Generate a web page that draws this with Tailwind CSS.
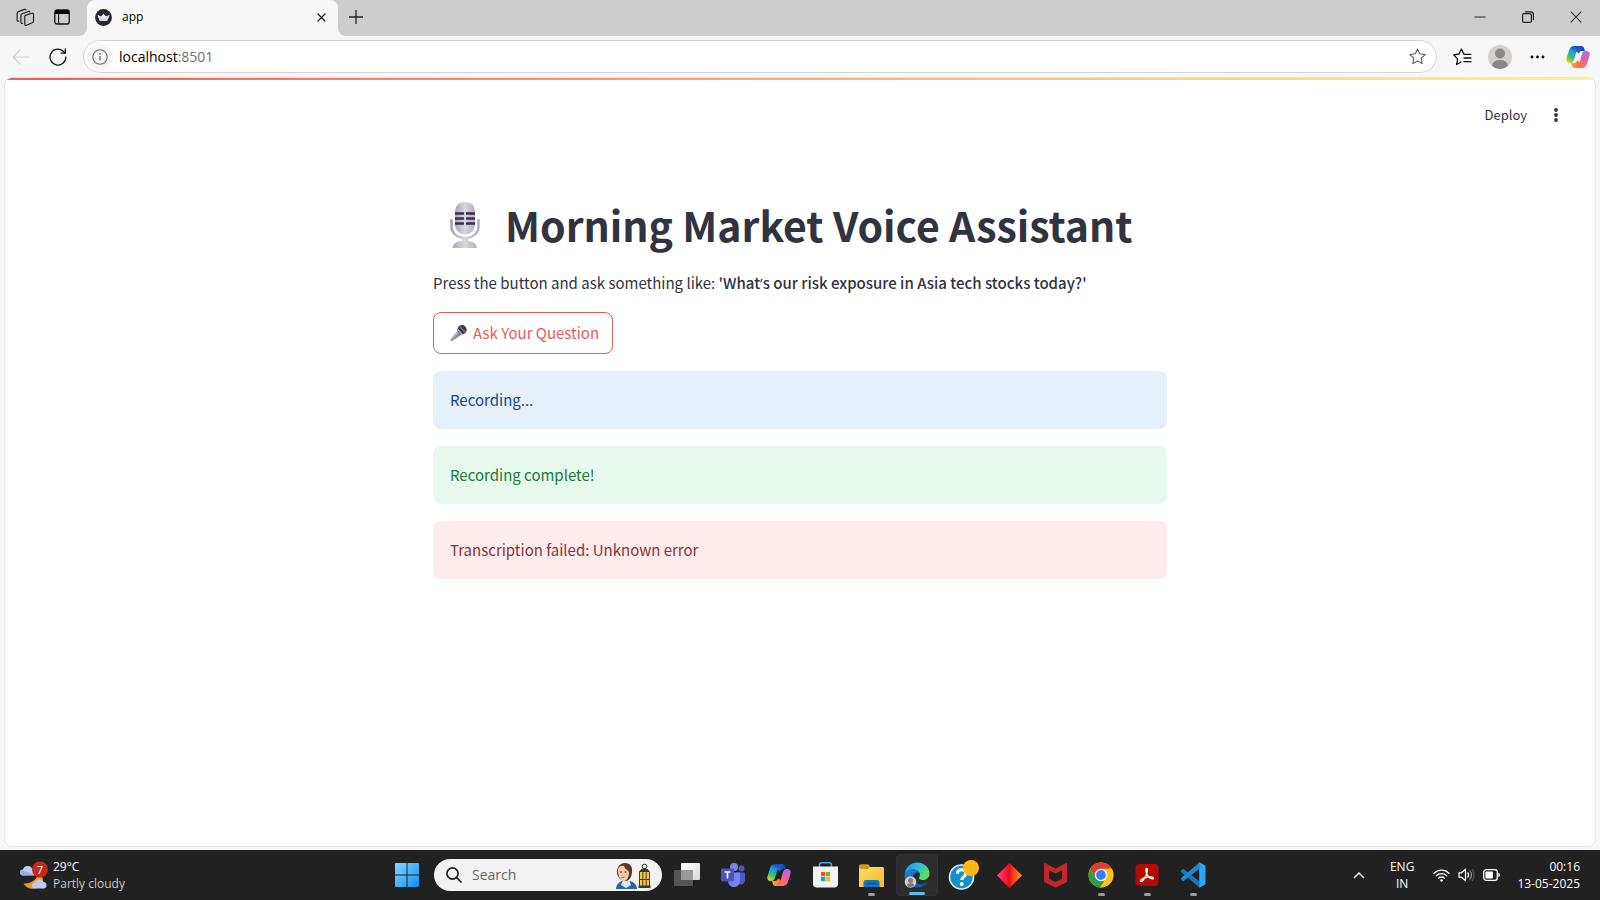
<!DOCTYPE html>
<html lang="en">
<head>
<meta charset="utf-8">
<meta name="viewport" content="width=device-width, initial-scale=1">
<title>app</title>
<script src="https://cdn.jsdelivr.net/npm/@tailwindcss/browser@4"></script>
</head>
<body class="flex h-screen flex-col overflow-hidden bg-[#f7f7f7] font-['Open_Sans','Noto_Sans',sans-serif] text-black">

<svg class="absolute h-0 w-0" aria-hidden="true">
  <defs>
    <linearGradient id="cpA" x1="0.6" y1="0" x2="0.2" y2="1"><stop offset="0" stop-color="#1b44c8"/><stop offset=".35" stop-color="#1fa3e6"/><stop offset=".65" stop-color="#3fbf6a"/><stop offset="1" stop-color="#f3d21c"/></linearGradient>
    <linearGradient id="cpB" x1="0.8" y1="0" x2="0.3" y2="1"><stop offset="0" stop-color="#a56bf0"/><stop offset=".5" stop-color="#ee5fa0"/><stop offset="1" stop-color="#ff7a3c"/></linearGradient>
    <linearGradient id="cpC" x1="0" y1="0" x2="1" y2="0"><stop offset="0" stop-color="#1f7be0"/><stop offset="1" stop-color="#1739a8"/></linearGradient>
    <linearGradient id="cpD" x1="0" y1="0" x2="1" y2="0"><stop offset="0" stop-color="#ffb03a"/><stop offset="1" stop-color="#f4503c"/></linearGradient>
    <symbol id="copilot" viewBox="0 0 24 24">
      <path fill="url(#cpC)" d="M8 1h7.500c1.600 0 2.200 1 2.600 2.300L19 6h-3c-1.500 0-2.500.8-3 2.400L9 6z"/>
      <path fill="url(#cpD)" d="M16 23H8.500c-1.600 0-2.200-1-2.600-2.300L5 18h3c1.500 0 2.500-.8 3-2.400l4 2.400z"/>
      <path fill="url(#cpA)" d="M8.500 1h5c-1.400.4-2 1.700-2.500 3.300L8.300 14c-.6 2.300-1.500 4-3.800 4H3.500C1 18-.2 15.800.5 13.200L3.300 4.500C4 2.200 5.700 1 8.500 1z"/>
      <path fill="url(#cpB)" d="M15.500 23h-5c1.400-.4 2-1.700 2.500-3.300l2.700-9.700c.6-2.300 1.500-4 3.800-4h1c2.500 0 3.700 2.200 3 4.800l-2.800 8.700c-.7 2.300-2.400 3.500-5.200 3.500z"/>
    </symbol>
  </defs>
</svg>

<!-- Tab strip -->
<header class="flex h-[36px] shrink-0">
  <div class="flex w-[87px] items-center gap-[19px] rounded-br-lg bg-[#cdcdcd] pb-0.5 pl-4">
    <button aria-label="Workspaces"><svg class="size-[19px]" viewBox="0 0 19 19" fill="none" stroke="#222" stroke-width="1.200" stroke-linejoin="round" stroke-linecap="round"><path d="M9.300 7.400 15.800 5.300c1-.3 1.700.2 1.700 1.100v6.500c0 .8-.4 1.500-1.200 1.800l-5.800 2.500c-.9.400-1.700 0-1.700-1V9.100c0-.9-.3-1.400.5-1.700z"/><path d="M6.500 15.300c-1 .3-1.600-.2-1.600-1.100V7.500c0-.8.400-1.500 1.200-1.800l6.200-2.200c.7-.2 1.300 0 1.500.5"/><path d="M2.700 13.200c-1 .2-1.600-.3-1.600-1.200V5.400c0-.8.400-1.500 1.200-1.800l6.200-2.200c.7-.2 1.300 0 1.500.5"/></svg></button>
    <button aria-label="Tab actions"><svg class="size-4" viewBox="0 0 16 16"><rect x=".8" y="1" width="14.400" height="14" rx="2.200" fill="none" stroke="#111" stroke-width="1.300"/><path d="M.8 5V3A2.200 2.200 0 0 1 3 1h10a2.200 2.200 0 0 1 2.200 2v2z" fill="#000"/><path d="M4.600 5v10" stroke="#111" stroke-width="1.100"/></svg></button>
  </div>
  <div class="w-[251px] bg-[linear-gradient(#cdcdcd_50%,#f7f7f7_50%)]">
    <div class="flex h-full items-center rounded-t-lg bg-[#f7f7f7] pr-2 pb-0.5 pl-2">
      <svg class="size-[17px]" viewBox="0 0 17 17"><circle cx="8.500" cy="8.500" r="8.400" fill="#262730"/><path d="m2.600 6 3.600 1.400 2.300-2.800 2.300 2.800L14.400 6l-1.900 5.200c-.1.300-.4.500-.7.500H5.200c-.3 0-.6-.2-.7-.5z" fill="#fff"/><path d="m2.600 6 5.900 3.600L14.400 6l-1.900 5.200c-.1.300-.4.500-.7.500H5.200c-.3 0-.6-.2-.7-.5z" fill="#dcdce0"/></svg>
      <span class="flex-1 pl-2.5 text-xs">app</span>
      <button aria-label="Close tab" class="p-1"><svg class="size-[9px]" viewBox="0 0 9 9"><path d="m.6.6 7.800 7.800M8.400.6.6 8.400" stroke="#111" stroke-width="1.300" fill="none"/></svg></button>
    </div>
  </div>
  <div class="flex flex-1 items-center justify-between rounded-bl-lg bg-[#cdcdcd] pb-0.5 pl-[11px]">
    <button aria-label="New tab"><svg class="size-[14px]" viewBox="0 0 14 14"><path d="M7 0v14M0 7h14" stroke="#222" stroke-width="1.300"/></svg></button>
    <div class="flex items-center gap-9 pr-[18px]">
      <button aria-label="Minimize"><svg class="size-3" viewBox="0 0 12 12"><path d="M.5 6h11" stroke="#333" stroke-width="1.100"/></svg></button>
      <button aria-label="Restore"><svg class="size-3" viewBox="0 0 12 12" fill="none" stroke="#222" stroke-width="1.200"><rect x=".6" y="2.600" width="8.800" height="8.800" rx="1.500"/><path d="M3 .8h6c1.300 0 2.400 1 2.400 2.400v6"/></svg></button>
      <button aria-label="Close"><svg class="size-3" viewBox="0 0 12 12"><path d="m.7.700 10.600 10.600M11.300.7.700 11.300" stroke="#333" stroke-width="1.100"/></svg></button>
    </div>
  </div>
</header>

<!-- Toolbar -->
<nav class="flex h-[41px] shrink-0 items-center pr-[10px] pl-3">
  <button aria-label="Back" class="mr-[19px]" disabled><svg class="h-4 w-[18px]" viewBox="0 0 18 16" fill="none" stroke="#cfcfcf" stroke-width="1.200" stroke-linecap="round"><path d="M17 8H1M8 1 1 8l7 7"/></svg></button>
  <button aria-label="Refresh" class="mr-4"><svg class="size-[18px]" viewBox="0 0 18 18" fill="none" stroke="#111" stroke-width="1.300" stroke-linecap="round"><path d="M16.800 9A7.900 7.900 0 1 1 13.900 3l2.100 1.900"/><path d="M16.300 1v4.200h-4.200"/></svg></button>
  <div class="flex h-[33px] flex-1 items-center rounded-full border border-[#d4d4d4] bg-white pr-2.5 pl-[3px]">
    <button aria-label="Site information" class="flex size-[26px] items-center justify-center rounded-full bg-[#f5f5f5]"><svg class="size-4" viewBox="0 0 16 16" fill="none" stroke="#666"><circle cx="8" cy="8" r="7.200" stroke-width="1.100"/><path d="M8 7v4.500" stroke-width="1.300"/><circle cx="8" cy="4.900" r=".5" fill="#666" stroke-width=".7"/></svg></button>
    <a href="http://localhost:8501" class="flex-1 pl-[6px] text-sm">localhost<span class="text-[#707070]">:8501</span></a>
    <button aria-label="Add to favorites"><svg class="size-[17px]" viewBox="0 0 18 18" fill="none" stroke="#555" stroke-width="1.100" stroke-linejoin="round"><path d="m9 1 2.400 5.200 5.700.7-4.200 3.900 1.100 5.700L9 13.700l-5 2.800 1.100-5.700L.9 6.900l5.700-.7z"/></svg></button>
  </div>
  <button aria-label="Favorites" class="ml-4 mr-4"><svg class="h-[18px] w-[19px]" viewBox="0 0 19 18" fill="none" stroke="#111" stroke-width="1.300" stroke-linejoin="round" stroke-linecap="round"><path d="M12.500 6.300 10.700 6 8.400 1 6 6l-5.300.8L4.600 11l-1 5.500L8 14"/><path d="M13 6.300h5M11 10h7M11 13.700h7"/></svg></button>
  <button aria-label="Profile" class="mr-[18px]"><svg class="size-6" viewBox="0 0 24 24"><circle cx="12" cy="12" r="12" fill="#d3d0ce"/><circle cx="12" cy="8.500" r="5" fill="#8b8785"/><path d="M4 20.800C4.500 17 7.500 15 12 15s7.500 2 8 5.800A12 12 0 0 1 12 24a12 12 0 0 1-8-3.200z" fill="#8b8785"/></svg></button>
  <button aria-label="Settings and more" class="mr-[21px]"><svg class="h-1 w-[15px]" viewBox="0 0 15 4"><circle cx="2" cy="2" r="1.400"/><circle cx="7.500" cy="2" r="1.400"/><circle cx="13" cy="2" r="1.400"/></svg></button>
  <button aria-label="Copilot"><svg class="size-6"><use href="#copilot"/></svg></button>
</nav>

<!-- Page -->
<main class="mx-1 mb-[3px] flex min-h-0 flex-1 flex-col overflow-hidden rounded-lg border border-[#e4e4e4] bg-white font-['Noto_Sans_CJK_SC',sans-serif] text-[#31333f]">
  <div class="h-0.5 shrink-0 bg-linear-to-r from-[#ee5a5a] to-[#fdf58a]"></div>
  <div class="flex h-[70px] items-center justify-end gap-[27px] pr-[37px]">
    <button class="text-[13px] leading-5">Deploy</button>
    <button aria-label="Main menu"><svg class="h-[14px] w-1" viewBox="0 0 4 14" fill="#31333f"><circle cx="2" cy="2" r="1.900"/><circle cx="2" cy="7" r="1.900"/><circle cx="2" cy="12" r="1.900"/></svg></button>
  </div>
  <div class="mx-auto flex w-full max-w-[734px] flex-col pt-[42px]">
    <h1 class="flex items-center text-[41px] leading-[64px] font-bold">
      <svg class="mr-[25px] ml-[17px] h-[47px] w-[30px]" viewBox="0 0 30 47" role="img" aria-label="Studio microphone"><defs><linearGradient id="mg" x1="0" x2="1"><stop offset="0" stop-color="#aaa5b3"/><stop offset=".5" stop-color="#d9d6de"/><stop offset="1" stop-color="#b4afc0"/></linearGradient></defs><path d="M1.500 19v6C1.500 32 7 37 15 37s13.500-5 13.500-12v-6" fill="none" stroke="url(#mg)" stroke-width="2.600" stroke-linecap="round"/><path d="M12 36h6v4c5 .5 8 2 9 7H2.500c1-5 4-6.500 9.500-7z" fill="url(#mg)"/><path d="M5 11C5 4.500 9 1 15 1s10 3.500 10 10v12c0 6-4 10.500-10 10.500S5 29 5 23z" fill="url(#mg)"/><path d="M5 12.500h9M16 12.500h9M5 17.500h9M16 17.500h9M5 22.500h9M16 22.500h9" stroke="#3b2c4d" stroke-width="2.400"/></svg>
      <span class="whitespace-nowrap">Morning Market Voice Assistant</span>
    </h1>
    <p class="mt-[14px] text-[15px] leading-[26px]">Press the button and ask something like: <strong class="font-medium">'What<span class="font-['Open_Sans']">’</span>s our risk exposure in Asia tech stocks today?'</strong></p>
    <button class="mt-4 flex h-[42px] items-center self-start rounded-lg border border-[#e85b5b] pr-[13px] pl-4 text-[15px] leading-[26px] text-[#e85b5b]">
      <svg class="mr-[6px] h-4 w-[17px]" viewBox="0 0 17 16" aria-hidden="true"><path d="m8 5.500 4 4L2 16c-.8.300-1.900-.8-1.500-1.600z" fill="#8f8a9a"/><path d="m8 5.500 1.500 1.500L1 15.500.5 14.400z" fill="#b5b1bd"/><circle cx="12" cy="4.700" r="4.600" fill="#3f3350"/><path d="m7.500 4.300 4.700 5.300" stroke="#a9a3b4" stroke-width="1.600"/><path d="m10 1.800 5 5.400" stroke="#8d859d" stroke-width="1.200"/></svg>
      Ask Your Question
    </button>
    <div class="mt-[17px] flex flex-col gap-[17px] text-[15px] leading-[26px]">
      <div role="status" class="rounded-lg bg-[#e6f0fb] px-[17px] py-4 text-[#13478a]">Recording...</div>
      <div role="status" class="rounded-lg bg-[#e7f8ed] px-[17px] py-4 text-[#207a3a]">Recording complete!</div>
      <div role="alert" class="rounded-lg bg-[#feebeb] px-[17px] py-4 text-[#80363f]">Transcription failed: Unknown error</div>
    </div>
  </div>
</main>

<!-- Taskbar -->
<footer class="grid h-[50px] shrink-0 grid-cols-[1fr_auto_1fr] items-center bg-[#212121] text-xs leading-4 text-white">
  <button class="flex items-center justify-self-start pl-5 text-left">
    <svg class="mr-[5px] h-7 w-[28px]" viewBox="0 0 28 28" aria-hidden="true"><path d="M3 14.500a3 3 0 0 1 0-6 5 5 0 0 1 9.500 0 3 3 0 0 1 1 6z" fill="#b9cdf5"/><path d="M3 14.500a3 3 0 0 1-1.500-5.500L14 13.500z" fill="#8fb0ea"/><path d="M19 12c6 4 5 12-2 15-5 2-11 0-13.500-4.500 6 .5 13-3 15.500-10.500z" fill="#f2932b"/><path d="M15 27.500a3 3 0 0 1 0-6 4.500 4.500 0 0 1 8.500-.5 3.300 3.300 0 0 1 .5 6.500z" fill="#b9cdf5"/><circle cx="20" cy="8.500" r="8" fill="#c42b1c"/><text x="20" y="12.500" font-size="11" fill="#fff" text-anchor="middle">7</text></svg>
    <span class="flex flex-col leading-[17px]"><span>29°C</span><span class="text-[#c8c8c8]">Partly cloudy</span></span>
  </button>

  <div class="flex items-center gap-1">
    <button aria-label="Start" class="flex h-[42px] w-[42px] items-center justify-center"><svg class="size-6" viewBox="0 0 24 24"><defs><linearGradient id="win" x1="0" y1="0" x2="1" y2="1"><stop offset="0" stop-color="#7fdcff"/><stop offset="1" stop-color="#0f8cf0"/></linearGradient></defs><path fill="url(#win)" d="M1 0h10.500v11.500H0V1a1 1 0 0 1 1-1zm11.500 0H23a1 1 0 0 1 1 1v10.500H12.500zM0 12.500h11.500V24H1a1 1 0 0 1-1-1zm12.500 0H24V23a1 1 0 0 1-1 1H12.500z"/></svg></button>
    <label class="ml-0.5 flex h-8 w-[228px] items-center rounded-full bg-[#f2f2f2] pr-[11px] pl-3">
      <svg class="size-4" viewBox="0 0 16 16" fill="none" stroke="#222" stroke-width="1.700" stroke-linecap="round"><circle cx="6.500" cy="6.500" r="5.600"/><path d="m10.700 10.700 4.300 4.300"/></svg>
      <input type="text" aria-label="Search" placeholder="Search" class="min-w-0 flex-1 bg-transparent pl-[10px] text-sm text-black outline-none placeholder:text-[#666]">
      <svg class="h-[27px] w-[36px]" viewBox="0 0 36 27" aria-hidden="true"><path d="M1 27c0-4 3-7 6-8h8c4 1 7 4 7 8z" fill="#2c62a8"/><path d="M8 18h6l2 5-5 3-5-3z" fill="#dce9f7"/><path d="M2 10C2 4 6 1 10 1s8 3 7 9c-.5 6-3 9-7 9S2 15 2 10z" fill="#5b3327"/><path d="M3 8c0-3 3-5 6-4 1 3 4 4 5 6 0 5-2 9-5 9-4 0-6-5-6-11z" fill="#f3c9ab"/><path d="M5 10h2M9.500 10h2" stroke="#4a2a20" stroke-width="1"/><path d="m6.500 15.500 3-.3" stroke="#c4534a"/><circle cx="29.500" cy="4.500" r="2.300" fill="none" stroke="#333" stroke-width="1"/><path d="M24 10c1-2.500 3-3.500 5.500-3.500S34 7.500 35 10z" fill="#3a352f"/><path d="M24.500 10h10v14h-10z" fill="#f6c744"/><path d="M24.500 10v14m3.300-14v14m3.400-14v14m3.300-14v14M24 17.500h11" stroke="#4a3a20" stroke-width="1"/><path d="M23.500 23.500h12V26h-12z" fill="#3a352f"/></svg>
    </label>
    <button aria-label="Task view" class="flex h-[42px] w-[42px] items-center justify-center"><svg class="size-[26px]" viewBox="0 0 26 26"><defs><linearGradient id="tv" x1="0" y1="0" x2="1" y2="1"><stop offset="0" stop-color="#fff"/><stop offset="1" stop-color="#d8d8d8"/></linearGradient></defs><rect x="7" y="1" width="19" height="17" rx="1" fill="url(#tv)"/><rect x="0" y="8" width="19" height="16" rx="1" fill="#555"/><path d="M7 8h12v10H7z" fill="#999"/></svg></button>
    <button aria-label="Teams" class="flex h-[42px] w-[42px] items-center justify-center"><svg class="size-[26px]" viewBox="0 0 26 26"><circle cx="21.500" cy="6.500" r="3" fill="#5059c9"/><path d="M16 10.500h9v7c0 3-2 5-4.500 5S16 21 16 18z" fill="#5059c9"/><circle cx="14" cy="5" r="4" fill="#7b83eb"/><path d="M8 10.500h12v8c0 4-2.500 6.500-6 6.500s-6-2.500-6-6.500z" fill="#7b83eb"/><rect x="1" y="6.500" width="13" height="13" rx="1.200" fill="#4b53bc"/><path d="M4.500 10h6M7.500 10v6.500" stroke="#fff" stroke-width="1.600"/></svg></button>
    <button aria-label="Copilot app" class="flex h-[42px] w-[42px] items-center justify-center"><svg class="size-6"><use href="#copilot"/></svg></button>
    <button aria-label="Store" class="flex h-[42px] w-[42px] items-center justify-center"><svg class="h-[26px] w-[25px]" viewBox="0 0 25 26"><path d="M6.500 5V3c0-1.500.7-2.200 2-2.200h8c1.300 0 2 .7 2 2.200v2" fill="none" stroke="#34a8e8" stroke-width="1.600"/><path d="M0 4.500h25V22c0 2-1.500 3.500-3.500 3.500h-18C1.500 25.500 0 24 0 22z" fill="#f3f3f3"/><path d="M8 10h4.200v4.200H8z" fill="#f25022"/><path d="M12.900 10h4.200v4.200h-4.200z" fill="#7fba00"/><path d="M8 14.900h4.200v4.200H8z" fill="#00a4ef"/><path d="M12.900 14.900h4.200v4.200h-4.200z" fill="#ffb900"/></svg></button>
    <button aria-label="File Explorer" class="relative flex h-[42px] w-[42px] items-center justify-center"><svg class="size-[25px]" viewBox="0 0 25 25"><defs><linearGradient id="fe" x1="0" y1="0" x2="1" y2="1"><stop offset="0" stop-color="#ffdc66"/><stop offset="1" stop-color="#f8b928"/></linearGradient></defs><path d="M0 6V3c0-1 .7-1.700 1.700-1.700h6.600c.8 0 1.300.3 1.700.9L12 5z" fill="#d9951b"/><path d="M0 5.500h9L11 4h12.500c.8 0 1.500.7 1.500 1.500V24H0z" fill="url(#fe)"/><path d="M4.500 24v-4.500c0-1.400 1-2.500 2.500-2.500h11c1.500 0 2.500 1.100 2.500 2.500V24z" fill="#1272c4"/><path d="M8 20.500h9.500" stroke="#0b4d90" stroke-width="1.500"/></svg><span class="absolute bottom-0 left-[18px] h-[3px] w-[7px] rounded-full bg-[#9b9b9b]"></span></button>
    <button aria-label="Edge" class="relative flex h-[42px] w-[42px] items-center justify-center rounded-sm border border-[#333] bg-[#2d2d2d]"><svg class="size-[26px]" viewBox="0 0 26 26"><defs><linearGradient id="ea" x1="0" y1="0" x2="1" y2=".6"><stop offset="0" stop-color="#1b8fe0"/><stop offset=".5" stop-color="#2cbfd4"/><stop offset="1" stop-color="#5fe05a"/></linearGradient><linearGradient id="eb" x1="0" y1="0" x2="1" y2="1"><stop offset="0" stop-color="#1a86dc"/><stop offset="1" stop-color="#0c4a9c"/></linearGradient></defs><path d="M.8 12C1.500 5 7 .5 13 .5 20.500.5 25.500 6 25.500 11.500c0 4-3 6.500-6.500 6.500-3 0-4.200-1.200-4-2.200.2-.8 1-1.300 1-3.300C16 9.500 12.500 7.500 9 7.500c-3.500 0-6.500 1.500-8.200 4.500z" fill="url(#ea)"/><path d="M.6 13C1.500 9.500 5 7.500 9 7.500c3 0 5.500 1.500 6.500 3.300C12 9.500 9 12 9 15.500c0 4.500 4.500 7.500 9.500 6.500 2-.4 3.500-1.200 4.500-1.800.5-.2.800.2.500.6C21 24 17.500 25.500 13.500 25.500 6 25.500.3 20 .6 13z" fill="url(#eb)"/><circle cx="6.500" cy="20" r="5.800" fill="#d0cecc"/><circle cx="6.500" cy="18.500" r="2.500" fill="#7d7a78"/><path d="M2.800 23.500c.5-1.800 2-2.500 3.700-2.500s3.200.7 3.700 2.500a5.800 5.800 0 0 1-7.400 0z" fill="#7d7a78"/></svg><span class="absolute bottom-0 left-3 h-[3px] w-4 rounded-full bg-[#60bdf0]"></span></button>
    <button aria-label="Get Help" class="flex h-[42px] w-[42px] items-center justify-center"><svg class="h-[32px] w-[32px]" viewBox="0 0 32 32"><circle cx="14.500" cy="18" r="12" fill="#1390d2" stroke="#e8f4fb" stroke-width="1.600"/><path d="M10.500 15c0-2.700 1.700-4.200 4.200-4.200 2.600 0 4.100 1.400 4.100 3.500 0 3.300-4 3.200-4 6.700" fill="none" stroke="#fff" stroke-width="3"/><circle cx="14.700" cy="25" r="1.900" fill="#fff"/><circle cx="24" cy="9" r="8" fill="#ffb90a"/></svg></button>
    <button aria-label="Diamond" class="flex h-[42px] w-[42px] items-center justify-center"><svg class="size-[25px]" viewBox="0 0 25 25"><defs><linearGradient id="dm" x1="0" x2="1"><stop offset="0" stop-color="#ff4a7b"/><stop offset=".3" stop-color="#ff1f4a"/><stop offset=".5" stop-color="#e80c18"/><stop offset=".6" stop-color="#f0301c"/><stop offset="1" stop-color="#ff9a1c"/></linearGradient></defs><path d="M12.500 0 25 12.500 12.500 25 0 12.500z" fill="url(#dm)"/></svg></button>
    <button aria-label="McAfee" class="flex h-[42px] w-[42px] items-center justify-center"><svg class="h-[26px] w-[23px]" viewBox="0 0 23 26"><path d="m0 .5 11.500 6L23 .5V20l-11.500 5.500L0 20zm5 7.700v8.600l6.500 3.200 6.500-3.200V8.200l-6.500 3.300z" fill="#c1272d" fill-rule="evenodd"/></svg></button>
    <button aria-label="Chrome" class="relative flex h-[42px] w-[42px] items-center justify-center"><svg class="size-[26px]" viewBox="0 0 26 26"><circle cx="13" cy="13" r="12.500" fill="#fbc116"/><path d="M13 .5A12.500 12.500 0 0 1 23.800 6.800L13 7l-5.200 9.200L2.200 6.700A12.500 12.500 0 0 1 13 .5z" fill="#e33b2e"/><path d="M2.200 6.700 7.800 16.200 13 19l-1 6.450A12.500 12.500 0 0 1 2.200 6.700z" fill="#2a9e48"/><path d="M7.800 16 13 19h5l-6 6.450z" fill="#2a9e48"/><path d="M18.200 16 12 25.450 13 25.500A12.500 12.500 0 0 0 23.800 6.800H13z" fill="#fbc116"/><circle cx="13" cy="13" r="6.200" fill="#fff"/><circle cx="13" cy="13" r="4.900" fill="#3a7df0"/></svg><span class="absolute bottom-0 left-[18px] h-[3px] w-[7px] rounded-full bg-[#9b9b9b]"></span></button>
    <button aria-label="Acrobat" class="relative flex h-[42px] w-[42px] items-center justify-center"><svg class="size-[24px]" viewBox="0 0 24 24"><rect x=".5" y="1" width="23" height="22" rx="3.500" fill="#b30b00"/><path d="M11.500 5.500c1.500 0 1 4-1 8-1.500 3-3.500 5.500-4.700 4.700-1.200-1 2-3 5-3.700 3-.8 7.500-1 7.500.7 0 1.500-3.500 0-5.300-2-1.700-1.900-2.800-7.700-1.500-7.700z" fill="none" stroke="#fff" stroke-width="1.400"/></svg><span class="absolute bottom-0 left-[18px] h-[3px] w-[7px] rounded-full bg-[#9b9b9b]"></span></button>
    <button aria-label="Visual Studio Code" class="relative flex h-[42px] w-[42px] items-center justify-center"><svg class="size-[26px]" viewBox="0 0 26 26"><path d="M1 8.800 2.700 7.300c.4-.3.900-.3 1.300 0L19 19v6L1 10z" fill="#1479bd"/><path d="m1 17.200 1.700 1.500c.4.300.9.300 1.300 0L19 7V1L1 16z" fill="#1a8ad0"/><path d="M18.500.7c.3-.3.700-.3 1.100-.2L24.500 3c.6.300 1 .9 1 1.600v16.800c0 .7-.4 1.300-1 1.600l-4.900 2.500c-.4.200-.8 0-1.100-.2.400.1.700-.2.700-.8V1.500c0-.6-.3-.9-.7-.8z" fill="#2ea5f0"/></svg><span class="absolute bottom-0 left-[18px] h-[3px] w-[7px] rounded-full bg-[#9b9b9b]"></span></button>
  </div>

  <div class="flex items-center justify-self-end pr-5">
    <button aria-label="Show hidden icons" class="mr-[25px]"><svg class="h-[7px] w-3" viewBox="0 0 12 7"><path d="m1 6 5-5 5 5" fill="none" stroke="#eee" stroke-width="1.500"/></svg></button>
    <button class="mr-[19px] flex flex-col text-center leading-[17px]"><span>ENG</span><span>IN</span></button>
    <button aria-label="Network, volume, battery" class="mr-[17px] flex items-center gap-2">
      <svg class="h-[14px] w-[17px]" viewBox="0 0 17 14" fill="none" stroke="#fff" stroke-width="1.300" stroke-linecap="round"><path d="M1 5.200a10.500 10.500 0 0 1 15 0M3.300 7.800a7.300 7.300 0 0 1 10.400 0M5.600 10.200a4.100 4.100 0 0 1 5.800 0"/><circle cx="8.500" cy="12.400" r="1" fill="#fff" stroke-width=".6"/></svg>
      <svg class="h-[14px] w-[17px]" viewBox="0 0 17 14" fill="none" stroke="#fff" stroke-width="1.200" stroke-linejoin="round" stroke-linecap="round"><path d="M1 4.800h2.500L7.500 1.200v11.600L3.500 9.200H1z"/><path d="M9.800 4.800c1 1.300 1 3.100 0 4.400"/><path d="M12 3c1.800 2.300 1.800 5.700 0 8" stroke="#999"/><path d="M14.200 1.300c2.400 3.200 2.400 8.200 0 11.400" stroke="#555"/></svg>
      <svg class="h-[12px] w-[17px]" viewBox="0 0 17 12"><rect x=".7" y=".7" width="13.600" height="10.600" rx="2.600" fill="none" stroke="#fff" stroke-width="1.300"/><rect x="2.400" y="2.400" width="7.500" height="7.200" rx="1" fill="#fff"/><path d="M15.300 4v4c1 0 1.700-.8 1.700-2s-.7-2-1.700-2z" fill="#fff"/></svg>
    </button>
    <button class="flex flex-col items-end leading-[17px]"><time>00:16</time><time>13-05-2025</time></button>
  </div>
</footer>
</body>
</html>
